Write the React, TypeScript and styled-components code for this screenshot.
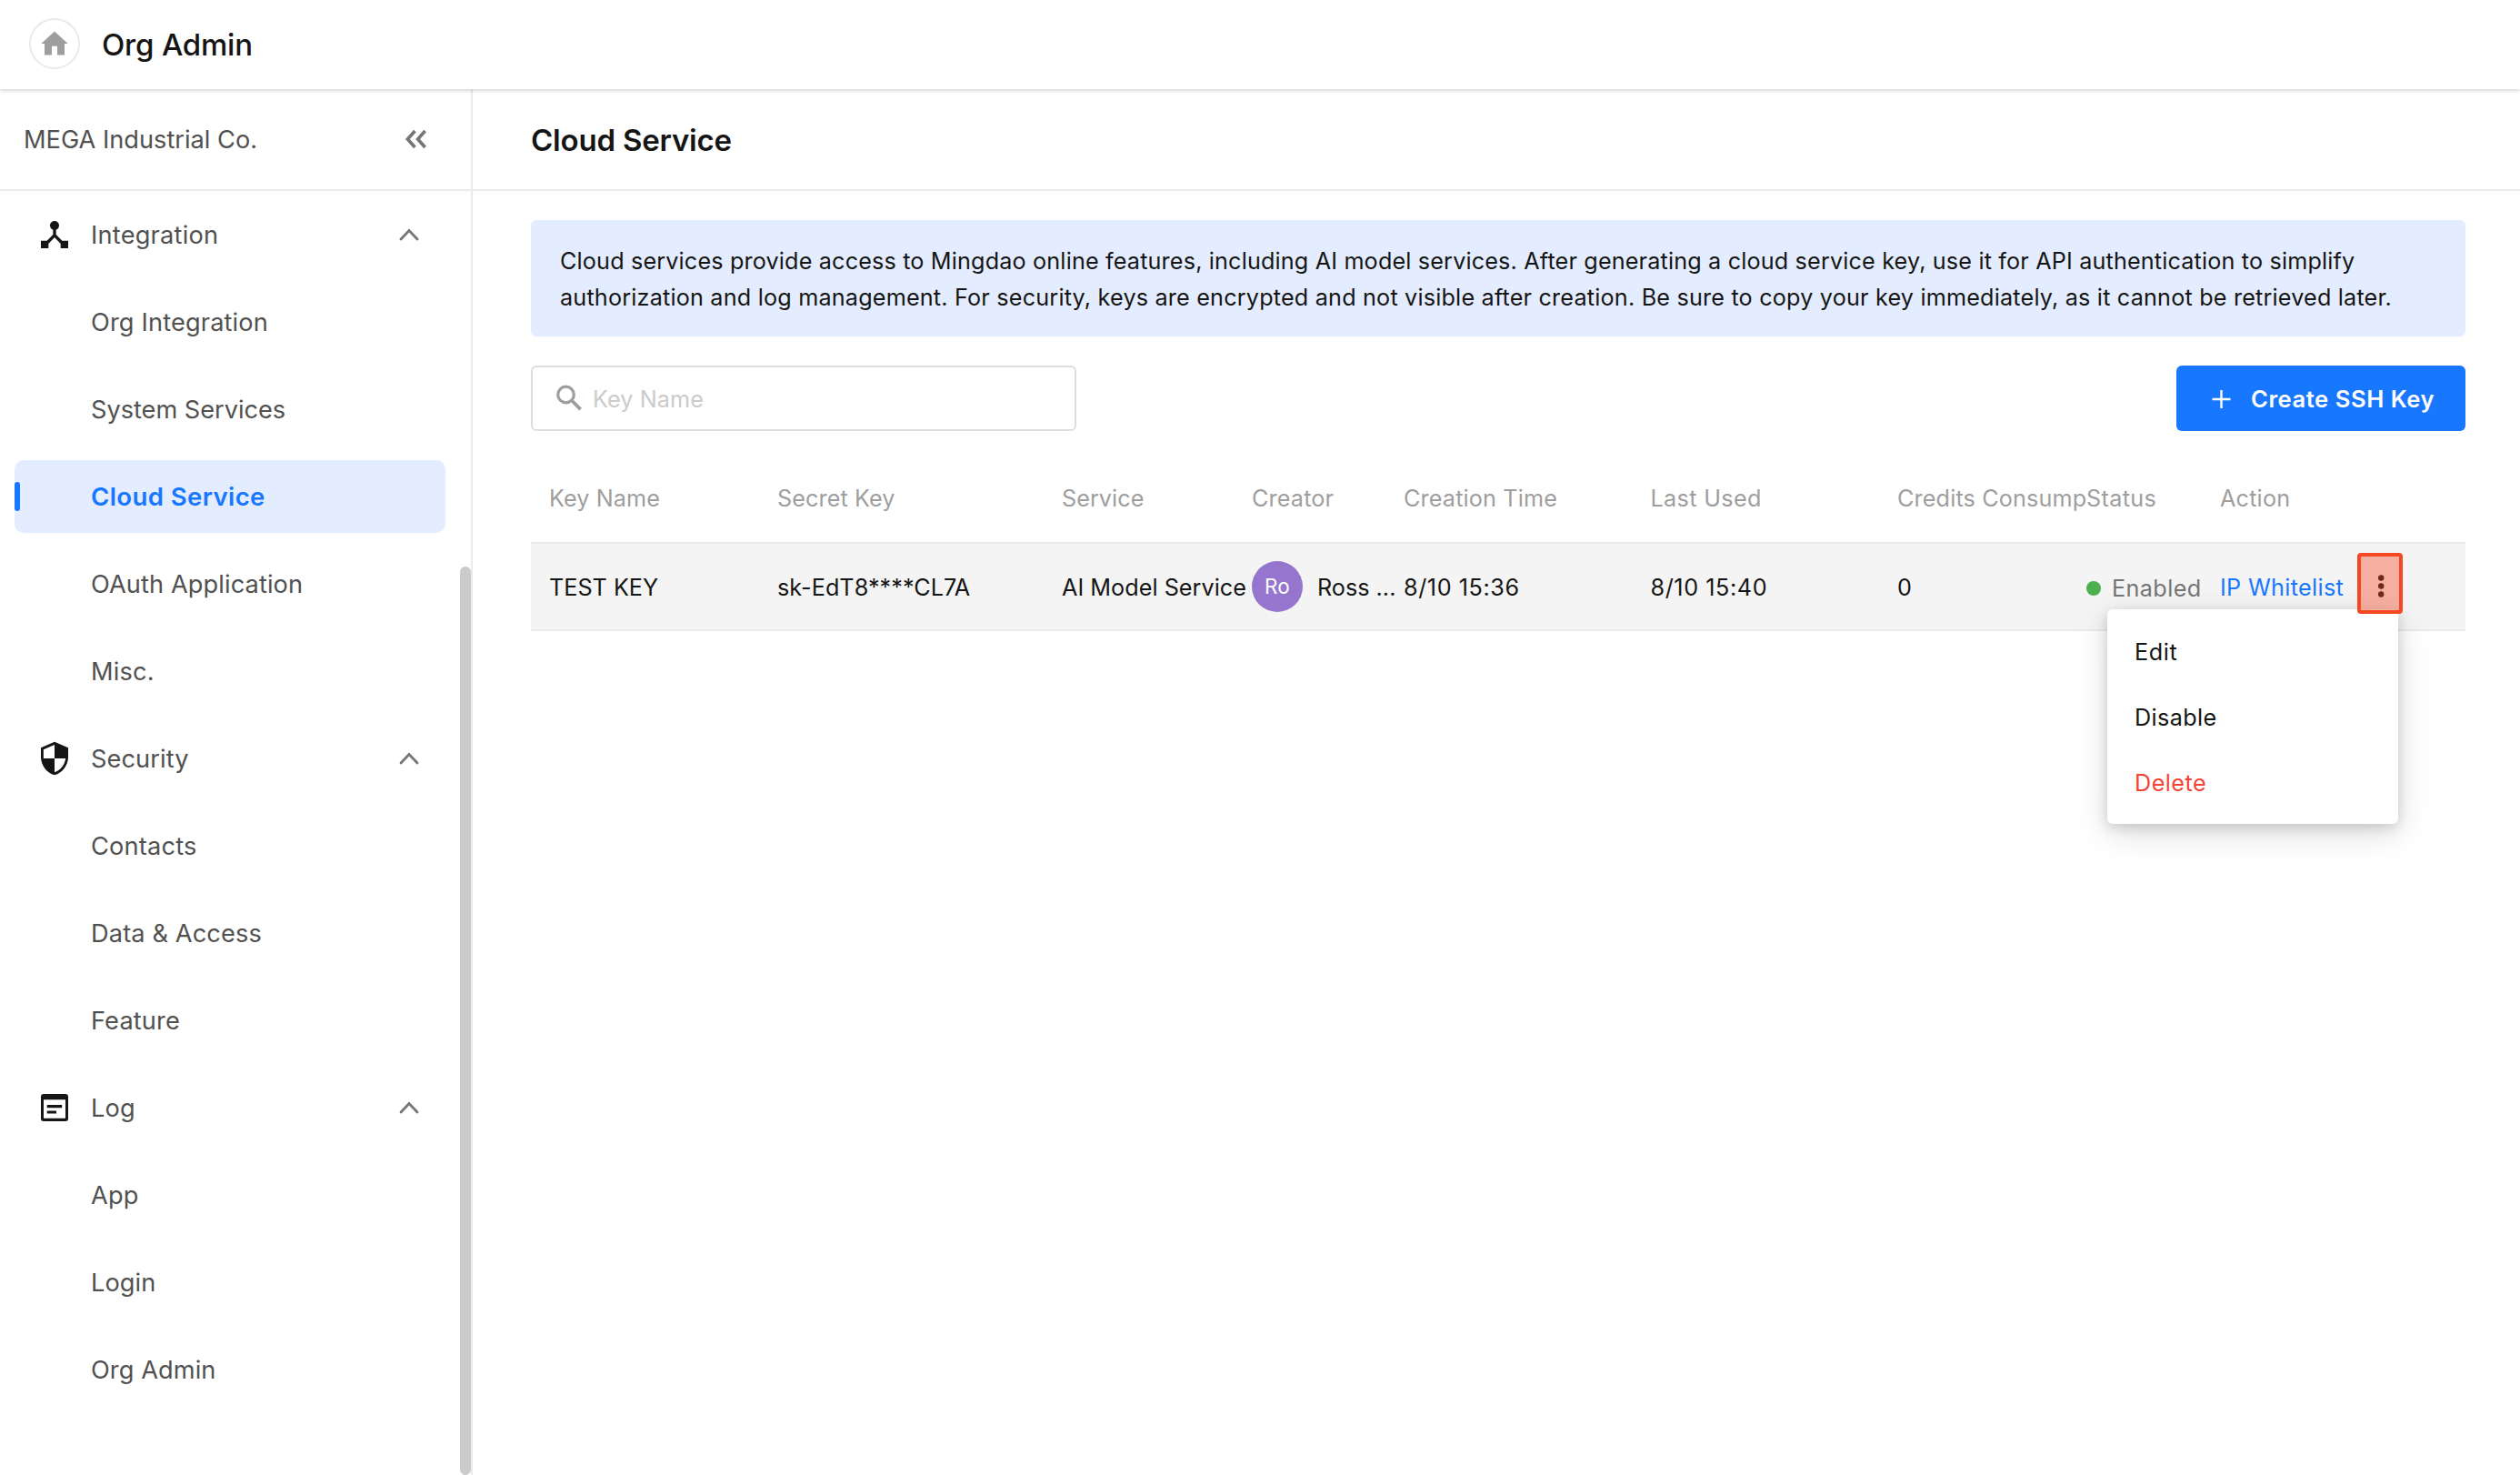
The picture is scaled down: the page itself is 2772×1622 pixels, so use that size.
import React from 'react';
import styled, { createGlobalStyle, css } from 'styled-components';

const color = {
  text: '#151515',
  secondary: '#515151',
  tertiary: '#757575',
  muted: '#9e9e9e',
  line: '#eaeaea',
  primary: '#1877ff',
  tint: '#e4edff',
  danger: '#f44336',
  success: '#4caf50',
  mark: '245, 72, 34',
};

const GlobalStyle = createGlobalStyle`
  *, *::before, *::after { box-sizing: border-box; }
  body {
    margin: 0;
    background: #fff;
    color: ${color.text};
    font-family: Inter, "Noto Sans", sans-serif;
    font-size: 25.2px;
    line-height: 40px;
  }
  button, input { font: inherit; color: inherit; }
`;

const Page = styled.div`
  display: flex;
  flex-direction: column;
  height: 1622px;
  overflow: hidden;
`;

/* Top bar */

const TopBar = styled.header`
  flex: none;
  z-index: 1;
  display: flex;
  align-items: center;
  gap: 24px;
  height: 98px;
  padding: 0 32px;
  background: #fff;
  box-shadow: 0 2px 4px rgba(0, 0, 0, 0.16);
`;

const HomeButton = styled.button`
  display: grid;
  place-items: center;
  width: 56px;
  height: 56px;
  margin: 0 0 2px;
  padding: 0;
  border: 2px solid ${color.line};
  border-radius: 50%;
  background: #fff;
`;

const TopTitle = styled.h1`
  margin: 0;
  font-size: 33px;
  font-weight: 500;
  letter-spacing: -0.2px;
`;

const Body = styled.div`
  flex: 1;
  display: flex;
  min-height: 0;
`;

/* Sidebar */

const Sidebar = styled.aside`
  flex: none;
  display: flex;
  flex-direction: column;
  width: 520px;
  border-right: 2px solid ${color.line};
  color: ${color.secondary};
  font-size: 27.2px;
`;

const OrgBar = styled.div`
  flex: none;
  display: flex;
  align-items: center;
  justify-content: space-between;
  height: 112px;
  padding: 0 48px 0 26px;
  border-bottom: 2px solid ${color.line};
`;

const OrgName = styled.span`
  padding-top: 2px;
`;

const NavArea = styled.div`
  flex: 1;
  display: flex;
  min-height: 0;
`;

const NavList = styled.nav`
  flex: 1;
  display: flex;
  flex-direction: column;
  gap: 16px;
  padding: 8px 16px;
`;

const NavItem = styled.div<{ $active?: boolean; $track?: number }>`
  position: relative;
  flex: none;
  display: flex;
  align-items: center;
  height: 80px;
  padding: 0 28px 0 24px;
  border-radius: 10px;
  letter-spacing: ${(p) => p.$track ?? 0.15}px;
  ${(p) =>
    p.$active &&
    css`
      background: ${color.tint};
      color: ${color.primary};
      font-size: 27.6px;
      font-weight: 600;

      &::before {
        content: '';
        position: absolute;
        left: 0;
        top: 24px;
        width: 6px;
        height: 32px;
        border-radius: 3px;
        background: ${color.primary};
      }
    `}
`;

const NavIcon = styled.span`
  flex: none;
  display: flex;
  width: 60px;
  height: 40px;
  color: ${color.text};
`;

const NavLabel = styled.span<{ $active?: boolean }>`
  flex: 1;
  padding-top: ${(p) => (p.$active ? 0 : 2)}px;
`;

const ScrollTrack = styled.div`
  flex: none;
  width: 12px;
  padding-top: 413px;
`;

const ScrollThumb = styled.div`
  height: 999px;
  border-radius: 6px;
  background: #cbcbcb;
`;

/* Main column */

const Main = styled.main`
  flex: 1;
  min-width: 0;
  display: flex;
  flex-direction: column;
`;

const PageHeader = styled.div`
  flex: none;
  display: flex;
  align-items: center;
  height: 112px;
  padding: 2px 64px 0;
  border-bottom: 2px solid ${color.line};
`;

const PageTitle = styled.h2`
  margin: 0;
  font-size: 33px;
  font-weight: 600;
  letter-spacing: -0.2px;
`;

const Content = styled.div`
  display: flex;
  flex-direction: column;
  padding: 32px 60px 0 64px;
`;

const Notice = styled.p`
  height: 128px;
  margin: 0 0 32px;
  padding: 25px 32px 23px;
  border-radius: 6px;
  background: ${color.tint};
`;

const NoticeLine = styled.span<{ $track: number }>`
  display: block;
  white-space: nowrap;
  letter-spacing: ${(p) => p.$track}px;
`;

const Toolbar = styled.div`
  display: flex;
  justify-content: space-between;
  margin-bottom: 26px;
`;

const SearchBox = styled.label`
  display: flex;
  align-items: center;
  gap: 10px;
  width: 600px;
  height: 72px;
  padding: 0 24px;
  border: 2px solid #ddd;
  border-radius: 6px;
`;

const SearchInput = styled.input`
  flex: 1;
  min-width: 0;
  height: 42px;
  padding: 2px 0 0;
  border: 0;
  outline: 0;
  background: none;
  letter-spacing: 0.1px;

  &::placeholder {
    color: #cbcbcb;
    opacity: 1;
  }
`;

const CreateButton = styled.button`
  display: flex;
  align-items: center;
  gap: 22px;
  width: 318px;
  height: 72px;
  padding: 2px 0 0 39px;
  border: 0;
  border-radius: 6px;
  background: ${color.primary};
  color: #fff;
  font-size: 25.6px;
  font-weight: 600;
  letter-spacing: 0.55px;
  white-space: nowrap;
`;

/* Table */

const rowGrid = css`
  display: grid;
  grid-template-columns: 251px 313px 209px 167px 271.5px 271.5px 208px 147px 1fr;
  padding-left: 20px;
`;

const HeadRow = styled.div`
  ${rowGrid}
  align-items: center;
  height: 96px;
  color: ${color.muted};
  white-space: nowrap;
`;

const DataRow = styled.div`
  ${rowGrid}
  height: 98px;
  border-top: 2px solid ${color.line};
  border-bottom: 2px solid ${color.line};
  background: #f4f4f4;
  white-space: nowrap;
`;

const HeadCell = styled.div<{ $track?: number }>`
  letter-spacing: ${(p) => p.$track ?? 0.15}px;
`;

const Cell = styled.div<{ $track?: number }>`
  display: flex;
  align-items: center;
  padding-top: 2px;
  letter-spacing: ${(p) => p.$track ?? 0}px;
`;

const CreatorCell = styled(Cell)`
  gap: 16px;
`;

const Avatar = styled.span`
  display: grid;
  place-items: center;
  width: 56px;
  height: 56px;
  margin-bottom: 2px;
  border-radius: 50%;
  background: #9575cd;
  color: #fff;
  font-size: 22.4px;
  letter-spacing: 0.3px;
`;

const StatusCell = styled(Cell)`
  gap: 12px;
  padding-top: 3px;
  color: ${color.tertiary};
`;

const StatusDot = styled.span`
  width: 16px;
  height: 16px;
  border-radius: 50%;
  background: ${color.success};
`;

const ActionCell = styled.div`
  display: flex;
  align-items: flex-start;
`;

const ActionLink = styled.a`
  width: 151px;
  padding-top: 28px;
  color: ${color.primary};
  letter-spacing: 0.33px;
`;

const MoreAnchor = styled.div`
  position: relative;
  width: 50px;
  height: 67px;
  margin-top: 10px;
`;

const MoreButton = styled.button`
  display: block;
  width: 50px;
  height: 67px;
  padding: 0;
  border: 0;
  background: none;
`;

const Highlight = styled.span`
  position: absolute;
  inset: 0;
  z-index: 3;
  border: 4px solid rgb(${color.mark});
  border-radius: 4px;
  background: rgba(${color.mark}, 0.4);
  background-clip: padding-box;
  pointer-events: none;
`;

const Menu = styled.div`
  position: absolute;
  z-index: 2;
  top: 62px;
  right: 5px;
  display: flex;
  flex-direction: column;
  width: 320px;
  height: 236px;
  padding-top: 11px;
  border-radius: 6px;
  background: #fff;
  box-shadow: 0 10px 36px rgba(0, 0, 0, 0.14), 0 4px 14px rgba(0, 0, 0, 0.14);
`;

const MenuItem = styled.div<{ $danger?: boolean; $track: number }>`
  flex: none;
  display: flex;
  align-items: center;
  height: 72px;
  padding: 0 30px;
  color: ${(p) => (p.$danger ? color.danger : color.text)};
  letter-spacing: ${(p) => p.$track}px;
`;

/* Icons */

const HomeIcon = () => (
  <svg width="32" height="28" viewBox="0 0 32 28" fill={color.muted}>
    <path d="M16 0.5 30.7 14H27V26.5H19V16.8H13V26.5H5V14H1.3Z" />
  </svg>
);

const CollapseIcon = () => (
  <svg width="26" height="24" viewBox="0 0 26 24" fill="none" stroke={color.tertiary} strokeWidth="3.6">
    <path d="M12.4 3 4.4 12l8 9M23.6 3l-8 9 8 9" />
  </svg>
);

const ChevronUp = () => (
  <svg width="24" height="16" viewBox="0 0 24 16" fill="none" stroke={color.tertiary} strokeWidth="2.8" strokeLinecap="round">
    <path d="M3 13 12 3.6 21 13" />
  </svg>
);

const HubIcon = () => (
  <svg width="40" height="40" viewBox="0 0 24 24" fill="currentColor">
    <path d="M17 16l-4-4V8.82C14.16 8.4 15 7.3 15 6c0-1.66-1.34-3-3-3S9 4.34 9 6c0 1.3.84 2.4 2 2.82V12l-4 4H3v5h5v-3.05l4-4.2 4 4.2V21h5v-5h-4z" />
  </svg>
);

const ShieldIcon = () => (
  <svg width="40" height="40" viewBox="0 0 24 24" fill="currentColor" fillRule="evenodd">
    <path d="M12 1L3 5v6c0 5.55 3.84 10.74 9 12 5.16-1.26 9-6.45 9-12V5l-9-4zm0 10.99h7.3c-.53 4.22-3.48 7.99-7.3 9.14V12H4.7V6.15l7.3-3.2v9.04z" />
  </svg>
);

const LogIcon = () => (
  <svg width="40" height="40" viewBox="0 0 40 40" fill="currentColor" fillRule="evenodd">
    <path d="M8 5H32a3 3 0 0 1 3 3V32a3 3 0 0 1-3 3H8a3 3 0 0 1-3-3V8a3 3 0 0 1 3-3ZM8 11.3V31.8H32V11.3Z" />
    <path d="M11.7 17H28.2V20.2H11.7ZM11.7 23.4H22V26.6H11.7Z" />
  </svg>
);

const SearchIcon = () => (
  <svg width="32" height="32" viewBox="0 0 32 32" fill="none" stroke={color.muted}>
    <circle cx="12.5" cy="12" r="8.8" strokeWidth="3.2" />
    <path d="M19 18.5 28.6 28.1" strokeWidth="3.8" />
  </svg>
);

const PlusIcon = () => (
  <svg width="21" height="20" viewBox="0 0 21 20" fill="none" stroke="currentColor" strokeWidth="2.4">
    <path d="M10.5 0V20M0.5 10H20.5" />
  </svg>
);

const MoreIcon = () => (
  <svg width="50" height="67" viewBox="0 0 50 67" fill={color.text}>
    <circle cx="26.2" cy="27.5" r="3.2" />
    <circle cx="26.2" cy="36.5" r="3.2" />
    <circle cx="26.2" cy="45.5" r="3.2" />
  </svg>
);

type Entry = { label: string; track?: number; icon?: React.ReactNode; active?: boolean };

const entries: Entry[] = [
  { label: 'Integration', track: 0.22, icon: <HubIcon /> },
  { label: 'Org Integration', track: 0.15 },
  { label: 'System Services', track: -0.03 },
  { label: 'Cloud Service', track: 0.38, active: true },
  { label: 'OAuth Application', track: 0.1 },
  { label: 'Misc.' },
  { label: 'Security', track: 0.08, icon: <ShieldIcon /> },
  { label: 'Contacts', track: 0.2 },
  { label: 'Data & Access', track: 0.12 },
  { label: 'Feature' },
  { label: 'Log', icon: <LogIcon /> },
  { label: 'App' },
  { label: 'Login', track: 0.05 },
  { label: 'Org Admin', track: 0.08 },
];

export default function App() {
  return (
    <Page>
      <GlobalStyle />
      <TopBar>
        <HomeButton aria-label="Home">
          <HomeIcon />
        </HomeButton>
        <TopTitle>Org Admin</TopTitle>
      </TopBar>
      <Body>
        <Sidebar>
          <OrgBar>
            <OrgName>MEGA Industrial Co.</OrgName>
            <CollapseIcon />
          </OrgBar>
          <NavArea>
            <NavList>
              {entries.map((e) => (
                <NavItem key={e.label} $active={e.active} $track={e.track}>
                  <NavIcon>{e.icon}</NavIcon>
                  <NavLabel $active={e.active}>{e.label}</NavLabel>
                  {e.icon && <ChevronUp />}
                </NavItem>
              ))}
            </NavList>
            <ScrollTrack>
              <ScrollThumb />
            </ScrollTrack>
          </NavArea>
        </Sidebar>
        <Main>
          <PageHeader>
            <PageTitle>Cloud Service</PageTitle>
          </PageHeader>
          <Content>
            <Notice>
              <NoticeLine $track={0.16}>
                Cloud services provide access to Mingdao online features, including AI model services. After generating a
                cloud service key, use it for API authentication to simplify
              </NoticeLine>
              <NoticeLine $track={0.19}>
                authorization and log management. For security, keys are encrypted and not visible after creation. Be sure
                to copy your key immediately, as it cannot be retrieved later.
              </NoticeLine>
            </Notice>
            <Toolbar>
              <SearchBox>
                <SearchIcon />
                <SearchInput placeholder="Key Name" />
              </SearchBox>
              <CreateButton>
                <PlusIcon />
                Create SSH Key
              </CreateButton>
            </Toolbar>
            <HeadRow>
              <HeadCell $track={0.1}>Key Name</HeadCell>
              <HeadCell $track={0.1}>Secret Key</HeadCell>
              <HeadCell $track={0.05}>Service</HeadCell>
              <HeadCell>Creator</HeadCell>
              <HeadCell>Creation Time</HeadCell>
              <HeadCell $track={0.35}>Last Used</HeadCell>
              <HeadCell>Credits Consump</HeadCell>
              <HeadCell $track={0.35}>Status</HeadCell>
              <HeadCell $track={0.2}>Action</HeadCell>
            </HeadRow>
            <DataRow>
              <Cell>TEST KEY</Cell>
              <Cell $track={0.05}>sk-EdT8****CL7A</Cell>
              <Cell $track={0.03}>AI Model Service</Cell>
              <CreatorCell>
                <Avatar>Ro</Avatar>
                Ross ...
              </CreatorCell>
              <Cell $track={0.58}>8/10 15:36</Cell>
              <Cell $track={0.58}>8/10 15:40</Cell>
              <Cell>0</Cell>
              <StatusCell $track={0.4}>
                <StatusDot />
                Enabled
              </StatusCell>
              <ActionCell>
                <ActionLink>IP Whitelist</ActionLink>
                <MoreAnchor>
                  <MoreButton aria-label="More">
                    <MoreIcon />
                  </MoreButton>
                  <Menu>
                    <MenuItem $track={0.6}>Edit</MenuItem>
                    <MenuItem $track={0.36}>Disable</MenuItem>
                    <MenuItem $danger $track={0.45}>
                      Delete
                    </MenuItem>
                  </Menu>
                  <Highlight />
                </MoreAnchor>
              </ActionCell>
            </DataRow>
          </Content>
        </Main>
      </Body>
    </Page>
  );
}
